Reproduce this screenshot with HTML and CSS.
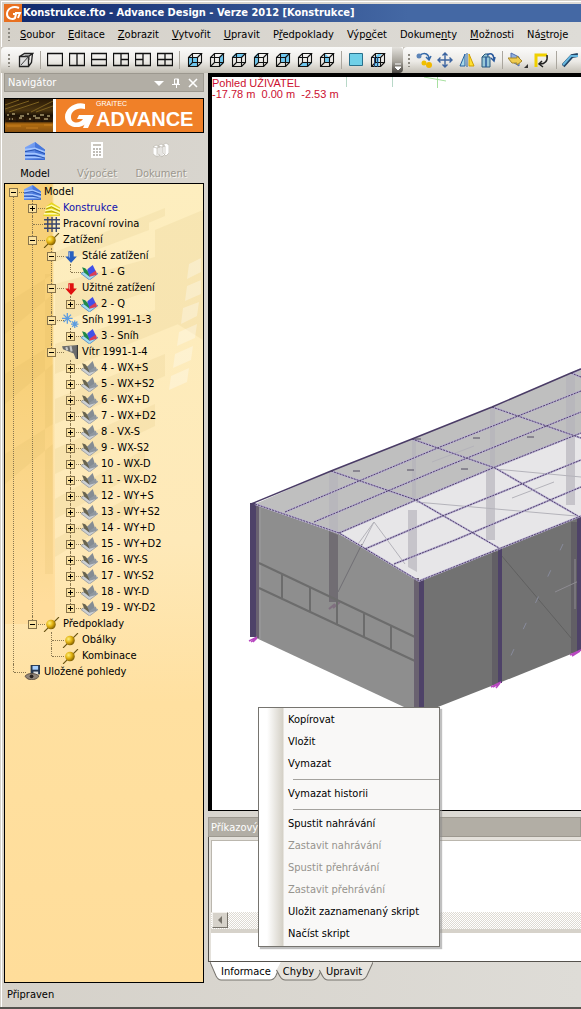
FILE: index.html
```html
<!DOCTYPE html>
<html lang="cs">
<head>
<meta charset="utf-8">
<title>Konstrukce.fto - Advance Design - Verze 2012 [Konstrukce]</title>
<link rel="stylesheet" href="styles.css">
</head>
<body>
<svg class="defs" aria-hidden="true">
  <defs>
    <linearGradient id="blue" x1="0" y1="0" x2="1" y2="1"><stop offset="0" stop-color="#8cb4ff"/><stop offset="1" stop-color="#2c5cc8"/></linearGradient>
    <radialGradient id="gold" cx=".35" cy=".35" r=".7"><stop offset="0" stop-color="#fff27a"/><stop offset=".5" stop-color="#e0b010"/><stop offset="1" stop-color="#7a5a00"/></radialGradient>
    <linearGradient id="photo" x1="0" y1="0" x2="0" y2="1"><stop offset="0" stop-color="#2a1a06"/><stop offset=".35" stop-color="#4a3410"/><stop offset=".5" stop-color="#1c1206"/><stop offset=".68" stop-color="#3c240a"/><stop offset=".76" stop-color="#b06c10"/><stop offset="1" stop-color="#8a5210"/></linearGradient>
  </defs>
  <symbol id="model" viewBox="0 0 16 14"><path d="m0 4 8-4 8 6v8H0z" fill="url(#blue)"/><path d="m8 0 8 6v8l-8-2z" fill="#4878dc"/><path d="m0 6 8-1 8 3M0 9h8l8 2M0 12h16" stroke="#a4c6ff" stroke-width="1.400" fill="none"/><path d="m0 7.500 8-1.500 8 3M0 10.500h8l8 2" stroke="#1c48a8" stroke-width=".7" fill="none"/></symbol>
  <symbol id="building" viewBox="0 0 16 14"><path d="m3 5 5-4 8 5v8H0l3-4z" fill="#e8d820"/><path d="m3 6 5-2 8 4M2 9l6-1 8 3M1 12h15" fill="none" stroke="#fffcb0" stroke-width="1.300"/><path d="m3 7.500 5-2 8 4M2 10.500l6-1 8 3" fill="none" stroke="#a09000" stroke-width=".7"/></symbol>
  <symbol id="grid" viewBox="0 0 16 14"><path d="M4.500 0v14M8.500 0v14M12.500 0v14M1 2.500h15M1 6.500h15M1 10.500h15" stroke="#38446c" stroke-width="1.300" fill="none"/></symbol>
  <symbol id="ball" viewBox="0 0 16 14"><path d="M1 14 15 0" stroke="#665010"/><circle cx="7.500" cy="7" r="4.500" fill="url(#gold)"/></symbol>
  <symbol id="arrow" viewBox="0 0 16 14"><path d="M6 2h5v5h3l-5.500 6L3 7h3z" fill="currentColor"/><path d="M7 3v5" stroke="#fff" opacity=".5"/></symbol>
  <symbol id="case" viewBox="0 0 16 14"><path d="m0 8 5-3 11 3-8 6z" fill="#a0dcf0" stroke="#5888c8" stroke-width=".8"/><path d="m1 2 3 1 4 5v3L3 7z" fill="#208848"/><path d="m6 4 5-4 3 6-6 5z" fill="#4050e8"/><path d="m8 9 6-4 1 4-7 2z" fill="#d84058"/></symbol>
  <symbol id="wind" viewBox="0 0 16 14"><path d="m0 8 5-3 11 3-8 6z" fill="#ccd0d4" stroke="#989ca0" stroke-width=".8"/><path d="m1 2 3 1 4 5v3L3 7z" fill="#686450"/><path d="m6 5 5-5 2 6-5 5z" fill="#848c94"/><path d="m8 9 6-4 1 4-7 2z" fill="#9098a0"/></symbol>
  <symbol id="snow" viewBox="0 0 16 14"><g stroke="#5c9ce0" stroke-width="1.200" fill="none"><path d="M5 0v10M0 5h10M1.500 1.500l7 7M8.500 1.500l-7 7M12 7v7M8.500 10.500h7M9.500 8l5 5M14.500 8l-5 5"/></g></symbol>
  <symbol id="sock" viewBox="0 0 16 14"><path d="m0 1 15-1v13h-2l-2-5-10-4z" fill="#6c6c6c"/><path d="m4 2 1 3m3-4 1 5" stroke="#c8c8c8" stroke-width="2"/><path d="M14.500 0v13" stroke="#333"/></symbol>
  <symbol id="views" viewBox="0 0 16 16"><path d="M6 0h10v10H6z" fill="#283850"/><path d="M8 1h6v4H8z" fill="#a8d0ff"/><path d="M9 7h5v3H9z" fill="#ddd"/><path d="M0 12c3-4 11-4 15 0-4 5-12 5-15 0" fill="#908478" stroke="#5a4c40"/><circle cx="7" cy="12" r="2" fill="#2c2420"/></symbol>
  <symbol id="cube" viewBox="0 0 16 16"><path d="M1.500 5.500h9v9h-9zM1.500 5.500l4-4h9l-4 4M14.500 1.500v9l-4 4M5.500 1.500v9l-4 4M5.500 10.500h9" fill="none" stroke="#111" stroke-width="1.100"/></symbol>
  <symbol id="calc" viewBox="0 0 12 16"><path d="M0 0h12v16H0z" fill="#fff"/><path d="M2 2h8v2H2z" fill="#c8c4bc"/><path d="M2 7h8M2 10h8M2 13h8" stroke="#aaa69e" stroke-width="1.500" stroke-dasharray="2 1"/></symbol>
  <symbol id="docs" viewBox="0 0 16 16"><path d="m10 3 3-2 3 2v8l-3 3-3-3zM5 4l3-2 4 2v8l-3 3-4-3zM0 5l3-2 4 2v8l-3 2-4-3z" fill="#fff" stroke="#bbb7af" stroke-width=".7"/><path d="m0 5 4 1 3-1M5 4l4 1 3-1M4 6v9M9 5v10" fill="none" stroke="#bbb7af" stroke-width=".7"/></symbol>
</svg>

<div class="window">
  <header class="title">
    <svg class="app" viewBox="0 0 18 18"><path d="M0 0h18v18H0z" fill="#e87020"/><path d="M15 4C9 1 3 5 3 10c0 5 6 6 8 4l1-4H9M11 9h5l-2 5" fill="none" stroke="#fff" stroke-width="2"/></svg>
    <h1>Konstrukce.fto - Advance Design - Verze 2012 [Konstrukce]</h1>
  </header>

  <nav class="menubar">
    <i class="grip"></i>
    <button><u>S</u>oubor</button><button><u>E</u>ditace</button><button><u>Z</u>obrazit</button><button><u>V</u>ytvořit</button><button><u>U</u>pravit</button><button>P<u>ř</u>edpoklady</button><button>Výp<u>o</u>čet</button><button>Dokume<u>n</u>ty</button><button><u>M</u>ožnosti</button><button>Ná<u>s</u>troje</button>
  </nav>

  <div class="toolbars">
    <div class="tools">
      <i class="grip"></i>
      <button aria-label="Pohled"><svg viewBox="0 0 16 16"><path d="M1.500 4.500h9v10h-9zl5-3h8l-4 3M14.500 1.500l-1 9-3 4" fill="#ddd" stroke="#222" stroke-width="1.300"/><path d="m3 13 8-9M7 4h4v4" fill="none" stroke="#444"/></svg></button>
      <i class="sep"></i>
      <button aria-label="Jedno okno"><svg viewBox="0 0 16 16"><path class="pane" d="M.5 1.500h15v12H.5z"/></svg></button>
      <button aria-label="Dvě okna svisle"><svg viewBox="0 0 16 16"><path class="pane" d="M.5 1.500h15v12H.5zM8 1.500v12"/></svg></button>
      <button aria-label="Dvě okna vodorovně"><svg viewBox="0 0 16 16"><path class="pane" d="M.5 1.500h15v12H.5zM.5 7.500h15"/></svg></button>
      <button aria-label="Tři okna vpravo"><svg viewBox="0 0 16 16"><path class="pane" d="M.5 1.500h15v12H.5zM8 1.500v12M8 7.500h7"/></svg></button>
      <button aria-label="Tři okna vlevo"><svg viewBox="0 0 16 16"><path class="pane" d="M.5 1.500h15v12H.5zM8 1.500v12M.5 7.500H8"/></svg></button>
      <button aria-label="Čtyři okna"><svg viewBox="0 0 16 16"><path class="pane" d="M.5 1.500h15v12H.5zM8 1.500v12M.5 7.500h15"/></svg></button>
      <i class="sep wide"></i>
      <button aria-label="Zepředu"><svg viewBox="0 0 16 16"><path class="face" d="M1 5h10v10H1z"/><use href="#cube"/></svg></button>
      <button aria-label="Zprava"><svg viewBox="0 0 16 16"><path class="face" d="m10 5 5-4v10l-5 4z"/><use href="#cube"/></svg></button>
      <button aria-label="Shora"><svg viewBox="0 0 16 16"><path class="face" d="m1 5 4-4h10l-4 4z"/><use href="#cube"/></svg></button>
      <button aria-label="Zleva"><svg viewBox="0 0 16 16"><path class="face" d="m1 5 4-4v10l-4 4z"/><use href="#cube"/></svg></button>
      <button aria-label="Zezadu"><svg viewBox="0 0 16 16"><path class="face" d="M5 1h10v10H5z"/><use href="#cube"/></svg></button>
      <button aria-label="Zdola"><svg viewBox="0 0 16 16"><path class="face" d="m1 15 4-4h10l-4 4z"/><use href="#cube"/></svg></button>
      <button aria-label="Izometrie"><svg viewBox="0 0 16 16"><path class="face" d="M5 1v10h5V5z"/><use href="#cube"/></svg></button>
      <i class="sep"></i>
      <button aria-label="Plocha"><svg viewBox="0 0 16 16"><path d="M1.500 1.500h13v12h-13z" fill="#70d0e8" stroke="#28708c"/></svg></button>
      <button aria-label="Řezy"><svg viewBox="0 0 16 16"><path class="face" d="m5 5 4-4h4L9 5v10H5z"/><use href="#cube"/><path d="M4.500 5v10M7.500 5v10" stroke="#247"/></svg></button>
      <button class="more" aria-label="Další"><svg viewBox="0 0 8 8"><path d="M1 1h6M1 4h6L4 7z" stroke="#fff" fill="#fff"/></svg></button>
    </div>
    <div class="tools second">
      <i class="grip"></i>
      <button aria-label="Kopírovat"><svg viewBox="0 0 16 16"><path d="M4 3c5-3 9-1 9 4M10 5l3 3 2-4" fill="none" stroke="#3468a8" stroke-width="1.500"/><circle cx="3" cy="4" r="2.500" fill="#5c84b8"/><circle cx="8" cy="11" r="2.500" fill="#f0c000"/><circle cx="13" cy="13" r="3" fill="#f0b800"/></svg></button>
      <button aria-label="Přesunout"><svg viewBox="0 0 16 16"><path d="M8 1v14M1 8h14M5.500 3.500 8 1l2.500 2.500M5.500 12.500 8 15l2.500-2.500M3.500 5.500 1 8l2.500 2.500M12.500 5.500 15 8l-2.500 2.500" fill="none" stroke="#3c64a0" stroke-width="1.400"/></svg></button>
      <button aria-label="Zrcadlit"><svg viewBox="0 0 16 16"><path d="M6 2v12H1z" fill="#a8d8e8" stroke="#2460a0"/><path d="M8 1v14" stroke="#2460a0"/><path d="M10 2v12h5z" fill="#ffe030" stroke="#d0a000"/></svg></button>
      <button aria-label="Otočit"><svg viewBox="0 0 16 16"><path d="M2 5h8v10H2zM2 5l3-3h3v3" fill="#98c8d8" stroke="#28587c"/><path d="M6 15V5M7 3c5-3 7 0 7 6M11 6l3 3 1-4" fill="none" stroke="#28589c" stroke-width="1.500"/></svg></button>
      <i class="sep"></i>
      <button class="drop" aria-label="Pracovní rovina"><svg viewBox="0 0 20 16"><path d="m3 1 8 4v9L3 9z" fill="#90b0e0" stroke="#5070b0"/><path d="M0 6h9V4l5 5-5 4v-2H4z" fill="#f0cc50" stroke="#a88828"/><path d="M16 16h4v-4z" fill="#333"/></svg></button>
      <button aria-label="Souřadnice"><svg viewBox="0 0 16 16"><path d="M2 15V3h11" fill="none" stroke="#f0d000" stroke-width="3"/><path d="M13 3c1 6-2 9-7 9M8 9l-3 3 4 3" fill="none" stroke="#222" stroke-width="1.500"/></svg></button>
      <i class="sep"></i>
      <button aria-label="Prvek"><svg viewBox="0 0 16 16"><path d="m1 14 9-10 6-1" stroke="#246" stroke-width="4" fill="none"/><path d="M1 13 9 4h7" stroke="#68b8e0" stroke-width="2" fill="none"/></svg></button>
    </div>
  </div>

  <main class="main">
    <aside class="navigator">
      <div class="panel-head"><h2>Navigátor</h2>
        <button aria-label="Nabídka"><svg viewBox="0 0 10 10"><path d="M0 3h10L5 8z" fill="#fff"/></svg></button>
        <button aria-label="Připnout"><svg viewBox="0 0 10 10"><path d="M3.500 1h4v5h-4zM1 6.500h8M5.500 6v4M6.500 1v5" fill="none" stroke="#fff"/></svg></button>
        <button aria-label="Zavřít"><svg viewBox="0 0 10 10"><path d="m1 1 8 8M9 1 1 9" stroke="#fff" stroke-width="1.600"/></svg></button>
      </div>
      <div class="banner">
        <svg class="photo" viewBox="0 0 48 33" preserveAspectRatio="none"><path d="M0 0h48v33H0z" fill="url(#photo)"/><path d="M0 6 14 1M0 10 24 2M4 13 34 3m14-1L26 13m22-6-17 6" stroke="#7c6020" fill="none"/><path d="M2 16h2m3-1h3m5 2h4m3-2h2m4 2h3m4-1h4m3 1h3M4 20h4m6-1h3m7 1h2m4-1h5m4 1h4" stroke="#e8d8a0"/><path d="M1 22h46M6 19v4m6-5v5m8-4v4m9-5v5m8-4v4" stroke="#201408" stroke-width="1.500"/><path d="M2 27h14m5 2h12m6-3h8" stroke="#c88020"/></svg>
        <div class="brand">
          <svg viewBox="0 0 30 27"><path d="M20 2C10-1 0 7 0 15c0 10 13 13 21 7l5-9H14l-2 4h6c-3 5-12 5-12-2 0-6 6-10 14-8z" fill="#fff"/><path d="M18 13h11l-6 13h-5l4-9h-5z" fill="#fff"/></svg>
          <div class="names"><span>GRAITEC</span><b>ADVANCE</b></div>
        </div>
      </div>
      <div class="modes">
        <button><svg viewBox="0 0 16 14" preserveAspectRatio="none"><use href="#model"/></svg><span>Model</span></button>
        <button disabled><svg viewBox="0 0 12 16"><use href="#calc"/></svg><span>Výpočet</span></button>
        <button disabled><svg viewBox="0 0 16 16"><use href="#docs"/></svg><span>Dokument</span></button>
      </div>
      <div class="tree-box">
        <svg class="backdrop" width="198" height="520" aria-hidden="true">
          <g fill="#c8a850" opacity=".1"><path d="m50 68 110-44v8L50 78zM70 62l74-30v14L70 74zM150 46l48-20v130l-48-30z"/><path d="M50 100 198 60v28L50 140zM50 160l148-50v20L50 190zM50 215l110-45v22L50 240zM50 265l100-45v22L50 290zM50 315l90-50v20l-90 50zM50 355l80-45v15l-80 48z"/><path d="M40 90v300h8V90zM0 120l48-30v20L0 150zM0 190l48-30v20L0 220zM0 270l48-30v20L0 300z"/></g>
          <g fill="#fff" opacity=".3"><path d="m184 80 12-6v14l-14 7zM182 102l14-6v14l-16 7zM178 124l16-6-2 14-16 8zM174 148l18-8-2 14-18 8zM170 170l18-8-2 14-18 8zM166 192l18-8-2 14-18 8z"/></g>
        </svg>
        <ul class="tree">
          <li><div class="node"><button class="tog" aria-label="Sbalit"></button><svg><use href="#model"/></svg><a href="#m">Model</a></div>
            <ul>
              <li><div class="node"><button class="tog plus" aria-label="Rozbalit"></button><svg><use href="#building"/></svg><a class="link" href="#k">Konstrukce</a></div></li>
              <li><div class="node"><i></i><svg><use href="#grid"/></svg><a href="#p">Pracovní rovina</a></div></li>
              <li><div class="node"><button class="tog" aria-label="Sbalit"></button><svg><use href="#ball"/></svg><a href="#z">Zatížení</a></div>
                <ul>
                  <li><div class="node"><button class="tog" aria-label="Sbalit"></button><svg class="dead"><use href="#arrow"/></svg><a href="#s">Stálé zatížení</a></div>
                    <ul><li><div class="node"><i></i><svg><use href="#case"/></svg><a href="#1">1 - G</a></div></li></ul></li>
                  <li><div class="node"><button class="tog" aria-label="Sbalit"></button><svg class="live"><use href="#arrow"/></svg><a href="#u">Užitné zatížení</a></div>
                    <ul><li><div class="node"><button class="tog plus" aria-label="Rozbalit"></button><svg><use href="#case"/></svg><a href="#2">2 - Q</a></div></li></ul></li>
                  <li><div class="node"><button class="tog" aria-label="Sbalit"></button><svg><use href="#snow"/></svg><a href="#sn">Sníh 1991-1-3</a></div>
                    <ul><li><div class="node"><button class="tog plus" aria-label="Rozbalit"></button><svg><use href="#case"/></svg><a href="#3">3 - Sníh</a></div></li></ul></li>
                  <li><div class="node"><button class="tog" aria-label="Sbalit"></button><svg><use href="#sock"/></svg><a href="#v">Vítr 1991-1-4</a></div>
                    <ul>
                      <li><div class="node"><button class="tog plus" aria-label="Rozbalit"></button><svg><use href="#wind"/></svg><a href="#4">4 - WX+S</a></div></li>
                      <li><div class="node"><button class="tog plus" aria-label="Rozbalit"></button><svg><use href="#wind"/></svg><a href="#5">5 - WX+S2</a></div></li>
                      <li><div class="node"><button class="tog plus" aria-label="Rozbalit"></button><svg><use href="#wind"/></svg><a href="#6">6 - WX+D</a></div></li>
                      <li><div class="node"><button class="tog plus" aria-label="Rozbalit"></button><svg><use href="#wind"/></svg><a href="#7">7 - WX+D2</a></div></li>
                      <li><div class="node"><button class="tog plus" aria-label="Rozbalit"></button><svg><use href="#wind"/></svg><a href="#8">8 - VX-S</a></div></li>
                      <li><div class="node"><button class="tog plus" aria-label="Rozbalit"></button><svg><use href="#wind"/></svg><a href="#9">9 - WX-S2</a></div></li>
                      <li><div class="node"><button class="tog plus" aria-label="Rozbalit"></button><svg><use href="#wind"/></svg><a href="#10">10 - WX-D</a></div></li>
                      <li><div class="node"><button class="tog plus" aria-label="Rozbalit"></button><svg><use href="#wind"/></svg><a href="#11">11 - WX-D2</a></div></li>
                      <li><div class="node"><button class="tog plus" aria-label="Rozbalit"></button><svg><use href="#wind"/></svg><a href="#12">12 - WY+S</a></div></li>
                      <li><div class="node"><button class="tog plus" aria-label="Rozbalit"></button><svg><use href="#wind"/></svg><a href="#13">13 - WY+S2</a></div></li>
                      <li><div class="node"><button class="tog plus" aria-label="Rozbalit"></button><svg><use href="#wind"/></svg><a href="#14">14 - WY+D</a></div></li>
                      <li><div class="node"><button class="tog plus" aria-label="Rozbalit"></button><svg><use href="#wind"/></svg><a href="#15">15 - WY+D2</a></div></li>
                      <li><div class="node"><button class="tog plus" aria-label="Rozbalit"></button><svg><use href="#wind"/></svg><a href="#16">16 - WY-S</a></div></li>
                      <li><div class="node"><button class="tog plus" aria-label="Rozbalit"></button><svg><use href="#wind"/></svg><a href="#17">17 - WY-S2</a></div></li>
                      <li><div class="node"><button class="tog plus" aria-label="Rozbalit"></button><svg><use href="#wind"/></svg><a href="#18">18 - WY-D</a></div></li>
                      <li><div class="node"><button class="tog plus" aria-label="Rozbalit"></button><svg><use href="#wind"/></svg><a href="#19">19 - WY-D2</a></div></li>
                    </ul></li>
                </ul></li>
              <li><div class="node"><button class="tog" aria-label="Sbalit"></button><svg><use href="#ball"/></svg><a href="#pr">Předpoklady</a></div>
                <ul>
                  <li><div class="node"><i></i><svg><use href="#ball"/></svg><a href="#o">Obálky</a></div></li>
                  <li><div class="node"><i></i><svg><use href="#ball"/></svg><a href="#ko">Kombinace</a></div></li>
                </ul></li>
            </ul></li>
          <li><div class="node"><i></i><svg><use href="#views"/></svg><a href="#ul">Uložené pohledy</a></div></li>
        </ul>
      </div>
    </aside>

    <section class="work">
      <div class="viewport">
        <svg class="scene" role="img" aria-label="3D model haly">
          <g transform="translate(-212 -77)">
            <path d="M346.500 77v10M392.500 77v10" stroke="#b8d8c8"/><path d="M424 77l22 4M437.500 77v11" stroke="#a8e0a0"/>
            <!-- roof -->
            <path d="m255 504 76-33 81-32 80-32 79-34 10-3v65L339 534z" fill="#bfbfbf"/>
            <path d="m339 534 77-34 79-33 86-34v83l-82 32-79 32z" fill="#e7e6e8"/>
            <g fill="#b4b2ba" opacity=".65"><path d="M329 472h9v62h-9zM408 510h9v62l-9-5zM486 468h9v72h-9zM412 440h4v60h-4zM490 408h5v60h-5zM566 375h9v130h-9z"/></g>
            <path d="m345 562 29-40 31 42M374 522l-36 70M416 502l160 14M495 469l86 8M432 462l42-16M512 498l42-16" stroke="#b4b3ba" fill="none"/>
            <!-- end wall -->
            <path d="m251 503 88 31 80 46v134L254 637z" fill="#8e8e8e"/>
            <path d="M260 508v131" stroke="#9c9c9e"/>
            <path d="m329 531 9 4v67h-9z" fill="#716d73"/>
            <path d="m329 609 6-5m-2 4 7-6" stroke="#807080" stroke-width="2"/><path d="m338 592 24-48M337 580v24" stroke="#706e74"/>
            <path d="m259 563 156 74M259 588l156 73M282 574v25M310 587v24M337 600v25M364 612v25M391 625v25" stroke="#6c6c6c" stroke-width="2" fill="none"/>
            <!-- side wall -->
            <path d="m420 581 79-33 82-32v134l-82 33-79 31z" fill="#727272"/>
            <path d="M492 552h6v133h-6zM571 522h6v131h-6z" fill="#625f65"/>
            <path d="m501 555 71 84" stroke="#606060"/><path d="m563 544-56 120" stroke="#888b9c" stroke-dasharray="7 22"/><path d="M575 559v50m-20-17 26-12" stroke="#8e8c92"/>
            <!-- columns -->
            <path d="M250 503h6v134h-6zM419 580h5v134h-5zM498 548h4v135h-4zM577 516h4v135h-4z" fill="#4e4268"/>
            <path d="M256 504h3v134h-3zM414 578h5v134h-5z" fill="#6a6270"/>
            <!-- purlins and rafters -->
            <g fill="none" stroke="#b9b0d2" stroke-width="2"><path d="m255 504 84 29 80 48 162-65M331 471l85 29 83 48M412 439l83 29 83 48M492 407l89 31M571 373l10 4M285 512l155-65 141-56M314 522l126-53 141-57M339 533l77-33 79-33 86-34M365 549l75-32 141-57M394 564l61-24 126-53M571 374l10-5"/></g>
            <path d="m255 504 84 29 80 48 162-65M331 471l85 29 83 48M412 439l83 29 83 48M492 407l89 31M571 373l10 4M285 512l155-65 141-56M314 522l126-53 141-57M339 533l77-33 79-33 86-34M365 549l75-32 141-57M394 564l61-24 126-53" fill="none" stroke="#50406c" stroke-dasharray="2 1"/>
            <path d="m251 504 80-33 81-32 80-32 79-34 10-4" fill="none" stroke="#4a3c66" stroke-width="1.500"/>
            <path d="M353 471h7m47-1h7m47-1h7m5-31h7m47-1h7m-120 2h7" stroke="#504a60" fill="none"/>
            <path d="m249 641 8-4m-6 5 6-4m-4 4 4-4M491 687l10-5m-8 5 7-4m-4 5 4-5M570 655l11-5m-9 6 8-5" stroke="#b848c0" stroke-width="1.500"/>
          </g>
        </svg>
        <p class="readout">Pohled UŽIVATEL<br>-17.78 m&nbsp; 0.00 m&nbsp; -2.53 m</p>
      </div>
      <div class="console">
        <h2 class="console-head">Příkazový</h2>
        <div class="console-body">
          <div class="log"></div>
          <div class="scroll"><button aria-label="Posunout vlevo"><svg viewBox="0 0 8 8"><path d="M6 0v8L2 4z" fill="#77736b"/></svg></button></div>
          <div class="entry"></div>
        </div>
        <div class="tabs">
          <button class="tab on"><svg viewBox="0 0 71 19" preserveAspectRatio="none"><path d="M0 0 6 14q2 4 5 4h48q4 0 6-4l6-14"/></svg><span>Informace</span></button>
          <button class="tab"><svg viewBox="0 0 48 19" preserveAspectRatio="none"><path d="M4 8 7 14q2 4 5 4h24q4 0 6-4l6-14H8z" stroke="none"/><path d="m4 8 3 6q2 4 5 4h24q4 0 6-4l6-14" fill="none"/></svg><span>Chyby</span></button>
          <button class="tab"><svg viewBox="0 0 54 19" preserveAspectRatio="none"><path d="M4 8 7 14q2 4 5 4h30q4 0 6-4l6-14H8z" stroke="none"/><path d="m4 8 3 6q2 4 5 4h30q4 0 6-4l6-14" fill="none"/></svg><span>Upravit</span></button>
        </div>
      </div>
      <div class="context" role="menu">
        <button>Kopírovat</button><button>Vložit</button><button>Vymazat</button><hr>
        <button>Vymazat historii</button><hr>
        <button>Spustit nahrávání</button><button disabled>Zastavit nahrávání</button><button disabled>Spustit přehrávání</button><button disabled>Zastavit přehrávání</button><button>Uložit zaznamenaný skript</button><button>Načíst skript</button>
      </div>
    </section>
  </main>
  <footer class="status">Připraven</footer>
</div>
</body>
</html>
```
FILE: styles.css
```css
* { box-sizing: border-box; }
body {
  margin: 0;
  background: #d6d2ca;
  color: #000;
  font: 11px/16px "DejaVu Sans Condensed", "Noto Sans", sans-serif;
}
button { margin: 0; padding: 0; border: 0; background: none; font: inherit; color: inherit; white-space: nowrap; }
h1, h2, p, ul { margin: 0; padding: 0; font: inherit; }
ul { list-style: none; }
a { color: inherit; text-decoration: none; }
svg { display: block; flex: none; }
.defs { position: absolute; width: 0; height: 0; }

.window {
  display: flex;
  flex-direction: column;
  min-height: 100vh;
  overflow: hidden;
  padding: 4px 0 0 4px;
  border-bottom: 2px solid #55534f;
  box-shadow: inset 1px 1px #d6d2ca, inset 2px 2px #fff;
  background: linear-gradient(90deg, #d5d1c9, #dedcd7);
}
.title { display: flex; align-items: center; height: 18px; background: linear-gradient(90deg, #10286c, #4468a4 70%, #4468a4); color: #fff; }
.app { width: 18px; height: 18px; }
.title h1 { padding-left: 1px; font-size: 11px; font-weight: bold; white-space: nowrap; }

.grip { width: 2px; height: 13px; flex: none; background: repeating-linear-gradient(#8c8981 0 2px, transparent 2px 4px); }
.menubar { display: flex; align-items: center; gap: 13px; height: 25px; padding-left: 4px; }
.menubar .grip { margin-right: -3px; }

.toolbars { display: flex; height: 26px; margin-left: -3px; background: #c8c4bc; }
.tools { display: flex; align-items: center; flex: none; padding-left: 7px; border-radius: 4px 0 0 0; background: linear-gradient(#fbfbfa, #eceae6 55%, #c2beb4); }
.tools button { display: grid; place-items: center; width: 22px; height: 24px; }
.tools svg { width: 16px; height: 16px; }
.tools > .grip { margin-right: 5px; }
.second { flex: 1; min-width: 0; overflow: hidden; padding-left: 5px; }
.second > .grip { margin-right: 3px; }
.sep { width: 1px; height: 18px; flex: none; margin: 0 3px; background: #aaa69e; }
.wide { margin-right: 4px; }
.pane { fill: none; stroke: #111; stroke-width: 1.3; }
.face { fill: #70c8f0; }
.tools .more { align-items: end; width: 11px; height: 26px; margin-left: 3px; padding-bottom: 2px; border-radius: 0 4px 4px 0; background: linear-gradient(#e4e2dd, #a8a49c 55%, #45423e); }
.tools .more svg { width: 8px; height: 8px; }
.tools .drop { width: 26px; }
.tools .drop svg { width: 20px; }

.main { display: flex; flex: 1; gap: 4px; }
.navigator { display: flex; flex-direction: column; flex: none; width: 200px; }
.panel-head { display: flex; align-items: center; gap: 7px; height: 19px; margin-bottom: 6px; padding: 0 5px 0 3px; border: 1px solid #9c988f; background: #b2aea5; color: #fff; }
.panel-head h2 { flex: 1; }
.panel-head svg { width: 10px; height: 10px; }
.banner { display: flex; height: 35px; border: 1px solid #000; background: #f08028; }
.photo { width: 48px; height: 33px; }
.brand { display: flex; flex: 1; align-items: center; gap: 1px; padding-left: 9px; border-left: 3px solid #fff; color: #fff; }
.brand svg { width: 30px; height: 27px; }
.names { display: flex; flex-direction: column; font-family: "Liberation Sans", sans-serif; }
.names span { font-size: 7px; line-height: 8px; }
.names b { font-size: 20px; line-height: 23px; }
.modes { display: flex; height: 50px; padding: 9px 0 0; }
.modes button { display: flex; flex-direction: column; align-items: center; gap: 6px; width: 62px; }
.modes button:last-child { width: 66px; }
.modes svg { width: 20px; height: 18px; }
.modes :disabled { color: #9c988f; text-shadow: 1px 1px #f4f2ee; }
.modes :disabled svg { height: 16px; margin-bottom: 2px; }

.tree-box { position: relative; flex: 1; border: 1px solid #000; background: linear-gradient(90deg, #f7d078 47px, transparent 49px) 0 0 / 100% 420px no-repeat, linear-gradient(#fdeebf, #fee9b8 45%, #ffe0a0 65%, #ffdd9a); }
.tree-box::before { content: ""; position: absolute; inset: 180px auto auto 0; width: 50px; height: 260px; background: linear-gradient(rgba(255,221,155,0), #ffdd9c 92%); }
.backdrop { position: absolute; top: 0; left: 0; }
.tree { position: relative; padding-left: 4px; }
.tree ul { padding-left: 19px; }
.tree li { position: relative; }
.tree li::before { content: ""; position: absolute; top: 0; bottom: 0; left: 4px; border-left: 1px dotted #8a7850; }
.tree li:last-child::before { bottom: auto; height: 8px; }
.tree > li:first-child::before { top: 8px; }
.node { position: relative; display: flex; align-items: center; height: 16px; white-space: nowrap; }
.node::before { content: ""; position: absolute; left: 5px; top: 8px; width: 12px; border-top: 1px dotted #8a7850; }
.node > i, .tog { flex: none; width: 9px; height: 9px; margin-right: 6px; }
.tog { position: relative; border: 1px solid #87744c; background: #fbe2a0; }
.tog::before { content: ""; position: absolute; left: 1px; top: 3px; width: 5px; height: 1px; background: #000; }
.plus::after { content: ""; position: absolute; left: 3px; top: 1px; width: 1px; height: 5px; background: #000; }
.node svg { position: relative; width: 17px; height: 15px; margin-right: 3px; }
.link { color: #1010b0; }
.dead { color: #2860c0; }
.live { color: #e01010; }

.work { position: relative; display: flex; flex: 1; flex-direction: column; min-width: 0; }
.viewport { position: relative; flex: 1; min-height: 0; overflow: hidden; border: solid #000; border-width: 4px 0 1px 4px; background: #fff; }
.scene { position: absolute; inset: 0; width: 100%; height: 100%; }
.readout { position: relative; font: 11px/11px "Liberation Sans", sans-serif; color: #cc1030; padding-top: 1px; white-space: nowrap; }
.console { flex: none; margin-top: 6px; }
.console-head { height: 20px; padding: 1px 2px; border: 1px solid #9c988f; background: #b2aea5; color: #fff; line-height: 17px; }
.console-body { display: flex; flex-direction: column; height: 125px; border: solid #55524d; border-width: 0 0 1px 1px; padding: 3px 0 0 2px; background: #e4e1db; }
.log { flex: 1; border: solid #bbb7ae; border-width: 1px 0 0 1px; background: #fff; }
.scroll { height: 17px; padding-left: 1px; background: repeating-conic-gradient(#fff 0 25%, #dedad2 0 50%) 0 0 / 2px 2px; }
.scroll button { display: grid; place-items: center; width: 16px; height: 16px; border: 1px solid; border-color: #f4f2ee #77736b #77736b #f4f2ee; background: #d6d2ca; }
.scroll svg { width: 8px; height: 8px; }
.entry { height: 32px; border-top: 4px solid #d6d2ca; background: #fff; }
.tabs { display: flex; height: 21px; padding-left: 2px; }
.tab { position: relative; height: 19px; padding: 0 11px; margin-right: -10px; }
.tab svg { position: absolute; inset: 0; width: 100%; height: 100%; fill: #e6e3dd; stroke: #77746e; }
.tab.on svg { fill: #fff; }
.tab span { position: relative; }

.context { position: absolute; left: 50px; bottom: 36px; width: 182px; padding: 1px 0; border: 1px solid #76746f; background: linear-gradient(90deg, #fff 8px, #d4d0c6 24px, #f9f8f7 25px); box-shadow: 2px 2px 1px #8888; }
.context button { display: block; width: 100%; height: 22px; padding-left: 29px; text-align: left; }
.context :disabled { color: #96938d; }
.context hr { height: 8px; margin: 0 0 0 34px; border: 0; background: linear-gradient(#a4a29e, #a4a29e) 0 4px / 100% 1px no-repeat; }
.status { height: 24px; padding: 4px 3px; }
```
